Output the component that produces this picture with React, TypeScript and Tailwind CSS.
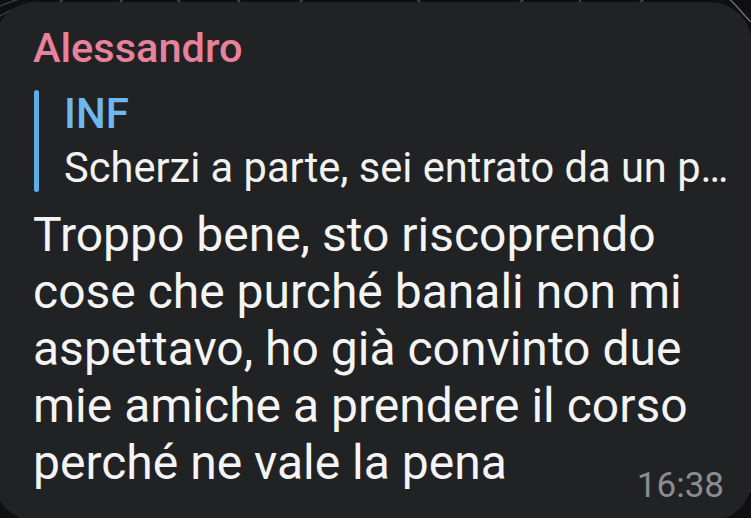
export default function App() {
  return (
    <div className="relative h-[518px] w-[751px] overflow-hidden bg-[#0e0f13] font-['Roboto',sans-serif]">
      {/* wallpaper doodles peeking out around the bubble */}
      <svg className="absolute left-0 top-0" width="751" height="40" viewBox="0 0 751 40" fill="none">
        <path d="M-10 22 C 5 12, 20 6, 36 2" stroke="#3a3b40" strokeWidth="1.5" />
        <path d="M-10 10 C 4 4, 14 1, 22 -2" stroke="#3a3b40" strokeWidth="1.5" />
        <path d="M60 2 L 64 -2 M120 2 L 124 -2 M180 2 L 176 -2 M240 2 L 236 -2 M300 2 L 304 -2 M420 2 L 416 -2 M520 2 L 526 -2 M580 2 L 580 -2 M640 2 L 646 -2" stroke="#55565b" strokeWidth="1.5" />
        <path d="M728 -2 C 738 6, 742 14, 751 22" stroke="#6a6b70" strokeWidth="1.5" />
      </svg>
      <svg className="absolute bottom-0 right-0" width="20" height="40" viewBox="0 0 20 40" fill="none">
        <path d="M20 12 C 14 16, 10 18, 6 22" stroke="#55565b" strokeWidth="1.5" />
      </svg>

      <div className="relative ml-[-6px] mt-[2px] w-[758px] rounded-[42px] bg-[#212224] pb-[15px] pl-[39px] pr-[28px] pt-[22px]">
        <div className="text-[41.5px] font-medium leading-[48px] text-[#e8819c]">Alessandro</div>

        <div className="mt-[18px] flex">
          <div className="ml-[1px] w-[5px] shrink-0 rounded-full bg-[#5eaeea]" />
          <div className="ml-[25px] flex flex-col gap-[6px] whitespace-nowrap">
            <div className="text-[42px] font-medium leading-[48px] text-[#6cb8ef]">INF</div>
            <div className="text-[41.6px] leading-[48px] text-[#f2f2f2]">Scherzi a parte, sei entrato da un p…</div>
          </div>
        </div>

        <p className="mt-[14px] whitespace-nowrap text-[48px] leading-[57px] text-[#f4f4f4]">
          Troppo bene, sto riscoprendo
          <br />
          cose che purché banali non mi
          <br />
          aspettavo, ho già convinto due
          <br />
          mie amiche a prendere il corso
          <br />
          perché ne vale la pena
        </p>

        <div className="mt-[-25px] flex justify-end">
          <span className="text-[35px] leading-[40px] text-[#8b8c90]">16:38</span>
        </div>
      </div>
    </div>
  );
}
